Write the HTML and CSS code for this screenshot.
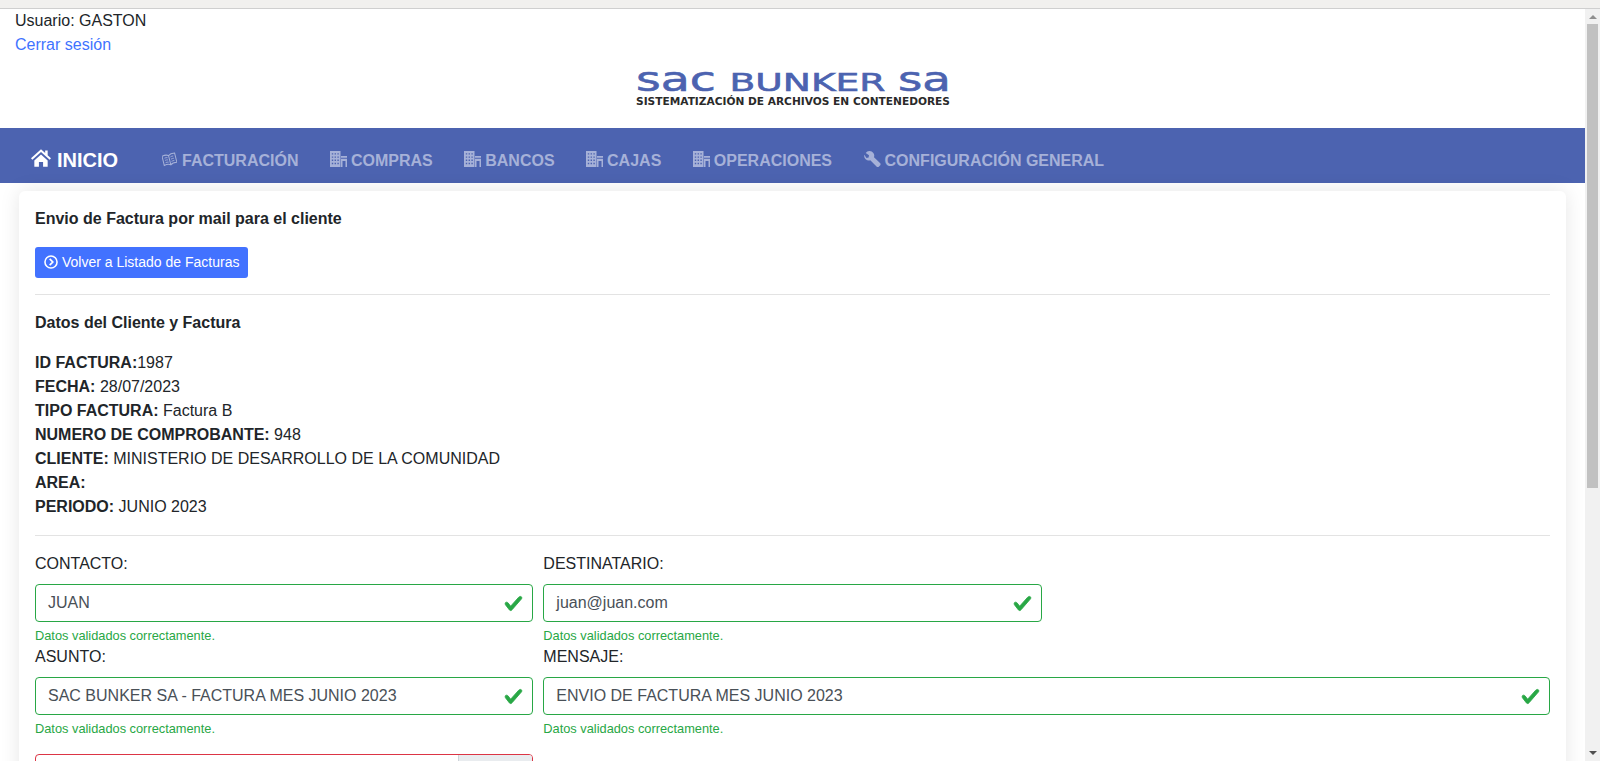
FILE: index.html
```html
<!DOCTYPE html>
<html lang="es">
<head>
<meta charset="utf-8">
<title>Envio de Factura</title>
<link rel="stylesheet" href="styles.css">
</head>
<body>
<div class="topstrip"></div>
<div class="viewport">
  <div class="page">
    <div class="userbox">
      <div>Usuario: GASTON</div>
      <a class="link" href="#">Cerrar sesión</a>
    </div>
    <div class="logo">
      <svg class="logo-svg" width="316" height="36" viewBox="0 0 316 36">
        <text class="logo-low" x="1" y="18" textLength="80" lengthAdjust="spacingAndGlyphs">sac</text>
        <text class="logo-big" x="94.500" y="18" textLength="156" lengthAdjust="spacingAndGlyphs">BUNKER</text>
        <text class="logo-low" x="263" y="18" textLength="53" lengthAdjust="spacingAndGlyphs">sa</text>
        <text class="logo-small" x="1" y="32" textLength="314" lengthAdjust="spacingAndGlyphs">SISTEMATIZACIÓN DE ARCHIVOS EN CONTENEDORES</text>
      </svg>
    </div>
    <nav class="nav">
      <a class="brand" href="#">
        <svg class="i-home" viewBox="0 0 24 21"><path d="M12 0 0 10.800l1.600 1.800L12 3.400l10.400 9.200 1.600-1.800-4-3.500V1.500h-3v3.100zM4 13.500V21h5.500v-5.800h5V21H20v-7.500L12 6.400z" fill="currentColor"/></svg>
        INICIO
      </a>
      <a class="item" href="#">
        <svg class="ic-book" viewBox="0 0 15 15"><g transform="rotate(-14 7.500 7.500)" fill="none" stroke="currentColor" stroke-width="1"><path d="M7.500 3.500C6 2.300 3.500 2 1 2.500v9.500c2.500-.5 5-.2 6.500 1 1.500-1.200 4-1.500 6.500-1V2.500c-2.500-.5-5-.2-6.500 1zM7.500 3.500V13"/><path d="M3 5c1-.2 2-.1 3 .2M3 7.300c1-.2 2-.1 3 .2M3 9.600c1-.2 2-.1 3 .2M9 5.200c1-.3 2-.4 3-.2M9 7.500c1-.3 2-.4 3-.2M9 9.800c1-.3 2-.4 3-.2" stroke-width=".8"/></g></svg>
        FACTURACIÓN
      </a>
      <a class="item" href="#"><svg class="ic" viewBox="0 0 17 16"><use href="#bld"/></svg>COMPRAS</a>
      <a class="item" href="#"><svg class="ic" viewBox="0 0 17 16"><use href="#bld"/></svg>BANCOS</a>
      <a class="item" href="#"><svg class="ic" viewBox="0 0 17 16"><use href="#bld"/></svg>CAJAS</a>
      <a class="item" href="#"><svg class="ic" viewBox="0 0 17 16"><use href="#bld"/></svg>OPERACIONES</a>
      <a class="item" href="#">
        <svg class="ic" viewBox="0 0 17 16"><path d="M5.500 0a4.500 4.500 0 0 0-3.800 2L5 4.300 4.600 6.500 2.500 7 .3 3.700A4.700 4.700 0 0 0 6.300 9.300L13 16h1.500L16.500 14v-1.500L10 6.200A4.700 4.700 0 0 0 5.500 0z" fill="currentColor"/></svg>
        CONFIGURACIÓN GENERAL
      </a>
    </nav>
    <main class="card">
      <h1 class="heading">Envio de Factura por mail para el cliente</h1>
      <a class="btn" href="#">
        <svg class="i-back" viewBox="0 0 16 16"><circle cx="8" cy="8" r="6.900" fill="none" stroke="currentColor" stroke-width="1.800"/><path d="M6.500 4.500 10 8l-3.500 3.500" fill="none" stroke="currentColor" stroke-width="2"/></svg>
        Volver a Listado de Facturas
      </a>
      <hr class="rule first">
      <h2 class="heading sub">Datos del Cliente y Factura</h2>
      <div class="data">
        <div><b>ID FACTURA:</b>1987</div>
        <div><b>FECHA:</b> 28/07/2023</div>
        <div><b>TIPO FACTURA:</b> Factura B</div>
        <div><b>NUMERO DE COMPROBANTE:</b> 948</div>
        <div><b>CLIENTE:</b> MINISTERIO DE DESARROLLO DE LA COMUNIDAD</div>
        <div><b>AREA:</b></div>
        <div><b>PERIODO:</b> JUNIO 2023</div>
      </div>
      <hr class="rule">
      <form class="form">
        <div class="field col1">
          <label class="label">CONTACTO:</label>
          <div class="input valid"><span>JUAN</span><svg class="check" viewBox="0 0 8 8"><use href="#chk"/></svg></div>
          <small class="ok">Datos validados correctamente.</small>
        </div>
        <div class="field col2">
          <label class="label">DESTINATARIO:</label>
          <div class="input valid"><span>juan@juan.com</span><svg class="check" viewBox="0 0 8 8"><use href="#chk"/></svg></div>
          <small class="ok">Datos validados correctamente.</small>
        </div>
        <div class="field col1">
          <label class="label">ASUNTO:</label>
          <div class="input valid"><span>SAC BUNKER SA - FACTURA MES JUNIO 2023</span><svg class="check" viewBox="0 0 8 8"><use href="#chk"/></svg></div>
          <small class="ok">Datos validados correctamente.</small>
        </div>
        <div class="field col2wide">
          <label class="label">MENSAJE:</label>
          <div class="input valid"><span>ENVIO DE FACTURA MES JUNIO 2023</span><svg class="check" viewBox="0 0 8 8"><use href="#chk"/></svg></div>
          <small class="ok">Datos validados correctamente.</small>
        </div>
        <div class="field col1 filefield">
          <div class="file"><span class="file-name"></span><span class="file-btn"></span></div>
        </div>
      </form>
    </main>
  </div>
  <div class="scrollbar">
    <span class="arrow up"></span>
    <div class="track"><div class="thumb"></div></div>
    <span class="arrow down"></span>
  </div>
</div>
<svg class="defs" width="0" height="0">
  <defs>
    <g id="bld" fill="currentColor">
      <path fill-rule="evenodd" d="M0 0h10.500v16H0zM1.800 2.200v1.400h1.400V2.200zm2.800 0v1.400H6V2.200zm2.800 0v1.400h1.400V2.200zM1.800 5.400v1.400h1.400V5.400zm2.800 0v1.400H6V5.400zm2.800 0v1.400h1.400V5.400zM1.800 8.600V10h1.400V8.600zm2.800 0V10H6V8.600zm2.800 0V10h1.400V8.600zM1.800 11.800v1.400h1.400v-1.400zm2.800 0v1.400H6v-1.400zm2.800 0v1.400h1.400v-1.400z"/>
      <path d="M11 5h6v1.800h-6zM11 7.800h6V16h-1.500v-6h-3v6H11z"/>
    </g>
    <path id="chk" fill="#28a745" stroke="#28a745" stroke-width=".35" d="M2.300 6.730.6 4.530c-.4-1.040.46-1.400 1.100-.8l1.100 1.400 3.400-3.800c.6-.63 1.600-.27 1.200.7l-4 4.600c-.43.5-.8.4-1.100.1z"/>
  </defs>
</svg>
</body>
</html>
```

FILE: styles.css
```css
* { box-sizing: border-box; }
html, body { margin: 0; height: 761px; overflow: hidden; }
body {
  font-family: "Liberation Sans", Arial, sans-serif;
  font-size: 16px;
  line-height: 24px;
  color: #212529;
  background: #fff;
  display: flex;
  flex-direction: column;
}
a { text-decoration: none; }
.defs { position: absolute; }
.topstrip { height: 9px; background: #f1f0ee; border-bottom: 1px solid #cfcfcf; flex: none; }
.viewport { flex: 1; display: flex; min-height: 0; }
.page { flex: 1; min-width: 0; overflow: hidden; }

.userbox { padding-left: 15px; height: 47px; }
.link { color: #3f73ff; }

.logo { height: 72px; display: flex; justify-content: center; padding-top: 17px; }
.logo-svg { display: block; overflow: visible; }
.logo-big { font-family: "DejaVu Sans", sans-serif; font-weight: 400; font-size: 24.700px; fill: #4c63b0; stroke: #4c63b0; stroke-width: .6px; }
.logo-low { font-family: "DejaVu Sans", sans-serif; font-weight: 400; font-size: 33px; fill: #4c63b0; stroke: #4c63b0; stroke-width: .6px; }
.logo-small { font-family: "DejaVu Sans", sans-serif; font-weight: 700; font-size: 9.700px; fill: #2a2a2a; }

.nav { height: 55px; background: #4c63b0; display: flex; align-items: center; padding: 8px 0 0 31px; font-weight: 700; }
.brand { color: #fff; font-size: 20px; display: flex; align-items: center; gap: 6px; width: 131px; flex: none; }
.i-home { width: 20px; height: 18px; margin-top: -4px; }
.item { color: #a6b1d8; display: flex; align-items: center; gap: 4px; margin: 2px 31.500px 0 0; white-space: nowrap; }
.ic { width: 17px; height: 16px; margin-top: -3px; }
.ic-book { width: 15px; height: 15px; margin: -3px 1px 0 0; }

.card {
  margin: 8px 19px 0;
  padding: 16px 16px 40px;
  background: #fff;
  border-radius: 6px;
  box-shadow: 0 0 20px rgba(0, 0, 0, .1);
}
.heading { margin: 0; font-size: 16px; line-height: 24px; font-weight: 700; }
.btn {
  margin-top: 16px;
  display: inline-flex;
  align-items: center;
  gap: 4px;
  height: 31px;
  padding: 0 9px 2px;
  border-radius: 3px;
  background: #4272ff;
  color: #fff;
  font-size: 14px;
}
.i-back { width: 14px; height: 14px; }
.rule { margin: 16px 0; border: 0; border-top: 1px solid #e3e3e3; }
.sub { margin-bottom: 16px; }
.data { margin-bottom: 16px; }
.form { display: grid; grid-template-columns: repeat(3, 1fr); column-gap: 10px; }
.field { display: flex; flex-direction: column; min-width: 0; }
.col1 { grid-column: 1; }
.col2 { grid-column: 2; }
.col2wide { grid-column: 2 / span 2; }
.label { display: block; margin-bottom: 8px; }
.input {
  height: 38px;
  display: flex;
  align-items: center;
  justify-content: space-between;
  padding: 0 9px 0 12px;
  border: 1px solid #28a745;
  border-radius: 4px;
  color: #495057;
}
.check { width: 19px; height: 19px; flex: none; }
.ok { display: block; margin-top: 4px; font-size: 12.800px; line-height: 19px; color: #28a745; height: 19px; }
.filefield { margin-top: 16px; }
.file { height: 38px; display: flex; border: 1px solid #dc3545; border-radius: 4px; overflow: hidden; }
.file-name { flex: 1; }
.file-btn { width: 74px; background: #e9ecef; border-left: 1px solid #ced4da; }

.scrollbar { width: 15px; flex: none; background: #f1f1f1; display: flex; flex-direction: column; align-items: center; }
.arrow { width: 0; height: 0; flex: none; border-left: 4px solid transparent; border-right: 4px solid transparent; }
.arrow.up { margin-top: 6px; border-bottom: 4px solid #8f8f8f; }
.arrow.down { margin-bottom: 6px; border-top: 4px solid #505050; }
.track { flex: 1; width: 11px; padding: 5px 0; }
.thumb { height: 464px; background: #c1c1c1; }
```
